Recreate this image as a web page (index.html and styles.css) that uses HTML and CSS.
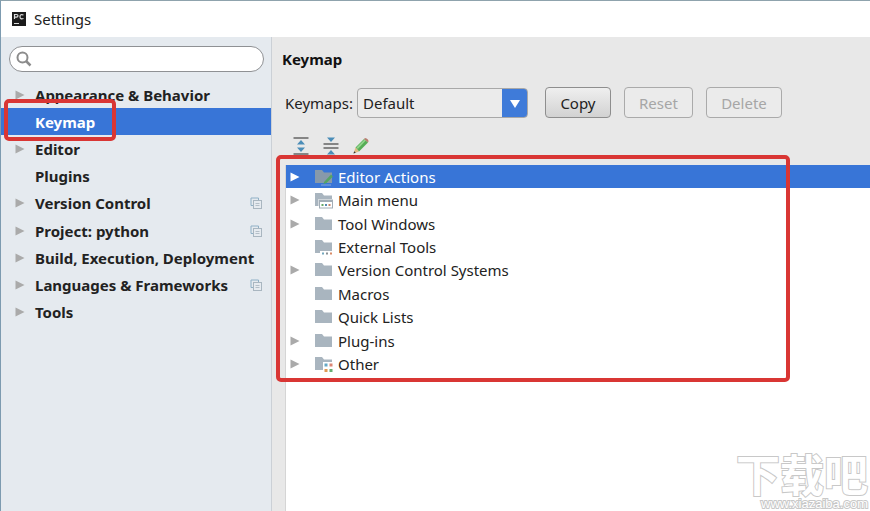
FILE: index.html
```
<!DOCTYPE html>
<html lang="en">
<head>
    <meta charset="UTF-8">
    <meta name="viewport" content="width=device-width, initial-scale=1.0">
    <title>Settings</title>
    <link rel="stylesheet" href="styles.css">
</head>
<body>
    <svg width="0" height="0" class="icon-defs" aria-hidden="true">
        <symbol id="arrow" viewBox="0 0 10 12">
            <path d="M0.5 1.5 L9.5 6 L0.5 10.5 Z" fill="currentColor"/>
        </symbol>
        <symbol id="copies" viewBox="0 0 12 12">
            <path d="M3 8.5 H1 V1 H8.500 V3" fill="none" stroke="#8fb0c6"/>
            <rect x="3.500" y="3.500" width="8" height="8" fill="#e6ebf0" stroke="#a9b6c0"/>
            <path d="M5.500 6.500 H9.500 M5.500 8.500 H9.500" stroke="#b4bfc8"/>
        </symbol>
        <symbol id="folder" viewBox="0 0 20 18">
            <path d="M1 2 H8 L10 4.500 H18 V15 H1 Z" fill="#a9b5bf"/>
        </symbol>
    </svg>

    <div class="window">
        <header class="titlebar">
            <svg class="app-icon" width="14" height="14" viewBox="0 0 14 14">
                <rect width="14" height="14" fill="#1c1c1c"/>
                <path d="M2.500 7 V2.500 H4.500 Q6 2.500 6 3.800 T4.500 5.200 H2.500 M11.500 3 Q8 1.700 8 4.700 T11.500 6.500" fill="none" stroke="#ddd" stroke-width="1.200"/>
                <path d="M2 11.500 H7" stroke="#ddd"/>
            </svg>
            <span>Settings</span>
        </header>

        <div class="content">
            <aside class="sidebar">
                <label class="search">
                    <svg width="16" height="16" viewBox="0 0 16 16" fill="none" stroke="#8c8c8c">
                        <circle cx="6.500" cy="6.500" r="5" stroke-width="2"/>
                        <path d="M10 10 L14.500 14.500" stroke-width="2.500"/>
                    </svg>
                    <input type="text" aria-label="Search settings">
                </label>
                <ul class="categories">
                    <li><svg class="arrow"><use href="#arrow"/></svg><span>Appearance &amp; Behavior</span></li>
                    <li class="selected"><span>Keymap</span><div class="mark mark-category"></div></li>
                    <li><svg class="arrow"><use href="#arrow"/></svg><span>Editor</span></li>
                    <li><span>Plugins</span></li>
                    <li><svg class="arrow"><use href="#arrow"/></svg><span>Version Control</span><svg class="copies"><use href="#copies"/></svg></li>
                    <li><svg class="arrow"><use href="#arrow"/></svg><span>Project: python</span><svg class="copies"><use href="#copies"/></svg></li>
                    <li><svg class="arrow"><use href="#arrow"/></svg><span>Build, Execution, Deployment</span></li>
                    <li><svg class="arrow"><use href="#arrow"/></svg><span>Languages &amp; Frameworks</span><svg class="copies"><use href="#copies"/></svg></li>
                    <li><svg class="arrow"><use href="#arrow"/></svg><span>Tools</span></li>
                </ul>
            </aside>

            <main class="panel">
                <h1>Keymap</h1>
                <div class="keymap-bar">
                    <label for="keymap">Keymaps:</label>
                    <div class="select">
                        <select id="keymap">
                            <option>Default</option>
                        </select>
                        <svg class="select-arrow" width="10" height="8" viewBox="0 0 10 8"><path d="M0 0 H10 L5 8 Z" fill="#fff"/></svg>
                    </div>
                    <div class="buttons">
                        <button type="button" class="copy">Copy</button>
                        <button type="button" class="reset" disabled>Reset</button>
                        <button type="button" class="delete" disabled>Delete</button>
                    </div>
                </div>

                <div class="toolbar">
                    <button type="button" aria-label="Expand all">
                        <svg width="16" height="18" viewBox="0 0 16 18">
                            <path d="M0.500 1 H15.500 M0.500 17 H15.500" stroke="#858585" stroke-width="2"/>
                            <path d="M8 3 L12 7.500 H4 Z M8 15 L12 10.500 H4 Z" fill="#4b8db8"/>
                        </svg>
                    </button>
                    <button type="button" aria-label="Collapse all">
                        <svg width="16" height="18" viewBox="0 0 16 18">
                            <path d="M0.500 7 H15.500 M0.500 11 H15.500" stroke="#858585" stroke-width="2"/>
                            <path d="M4 0.500 H12 L8 5 Z M4 17.500 H12 L8 13 Z" fill="#4b8db8"/>
                        </svg>
                    </button>
                    <button type="button" aria-label="Edit">
                        <svg width="16" height="18" viewBox="0 0 16 18">
                            <path d="M2.500 10.500 L11 2 L15 5.500 L6 14.500 Z" fill="#55ad55"/>
                            <path d="M3.500 10.500 L11.500 2.500 L12.800 3.500 L4.800 12 Z" fill="#93d58d"/>
                            <path d="M11 2 L12 1 Q15.500 1.500 15.500 4.500 L15 5.500 Z" fill="#b77d70"/>
                            <path d="M2.500 10.500 L6 14.500 L0.500 16.500 Z" fill="#dfbd83"/>
                            <path d="M1.200 14.300 L2.800 15.700 L0.500 16.500 Z" fill="#333"/>
                        </svg>
                    </button>
                </div>

                <div class="tree">
                    <ul class="actions">
                        <li class="selected">
                            <svg class="arrow"><use href="#arrow"/></svg>
                            <svg class="folder" viewBox="0 0 20 18"><path d="M1 2 H8 L10 4.500 H18 V15 H1 Z" fill="#8799aa"/><path d="M10 14 L17 6.500 L19 8.500 L12.500 15 L9.500 16 Z" fill="#55a464"/><path d="M7 17 H17" stroke="#87aadd"/></svg>
                            <span>Editor Actions</span>
                        </li>
                        <li>
                            <svg class="arrow"><use href="#arrow"/></svg>
                            <svg class="folder" viewBox="0 0 20 18"><use href="#folder"/><rect x="4.500" y="8" width="15" height="10" fill="#fff"/><rect x="5.500" y="9" width="13" height="8" fill="#fff" stroke="#a2adb6"/><path d="M5 10 H19" stroke="#a2adb6" stroke-width="2"/><path d="M7.500 14 H9.500" stroke="#65a765" stroke-width="2"/><path d="M11 14 H13" stroke="#5689b0" stroke-width="2"/><path d="M14.500 14 H16.500" stroke="#c48268" stroke-width="2"/></svg>
                            <span>Main menu</span>
                        </li>
                        <li>
                            <svg class="arrow"><use href="#arrow"/></svg>
                            <svg class="folder"><use href="#folder"/></svg>
                            <span>Tool Windows</span>
                        </li>
                        <li>
                            <svg class="folder" viewBox="0 0 20 18"><use href="#folder"/><rect x="6" y="13" width="14" height="5" fill="#fff"/><path d="M8 15.500 H10" stroke="#74a8bd" stroke-width="2"/><path d="M12 15.500 H14" stroke="#8a9093" stroke-width="2"/><path d="M16 15.500 H18" stroke="#d98b68" stroke-width="2"/></svg>
                            <span>External Tools</span>
                        </li>
                        <li>
                            <svg class="arrow"><use href="#arrow"/></svg>
                            <svg class="folder"><use href="#folder"/></svg>
                            <span>Version Control Systems</span>
                        </li>
                        <li>
                            <svg class="folder"><use href="#folder"/></svg>
                            <span>Macros</span>
                        </li>
                        <li>
                            <svg class="folder"><use href="#folder"/></svg>
                            <span>Quick Lists</span>
                        </li>
                        <li>
                            <svg class="arrow"><use href="#arrow"/></svg>
                            <svg class="folder"><use href="#folder"/></svg>
                            <span>Plug-ins</span>
                        </li>
                        <li>
                            <svg class="arrow"><use href="#arrow"/></svg>
                            <svg class="folder" viewBox="0 0 20 18"><use href="#folder"/><rect x="9" y="7" width="11" height="11" fill="#fff"/><rect x="10.500" y="8.500" width="3" height="3" fill="#64a8c5"/><rect x="15.500" y="8.500" width="3" height="3" fill="#dc8674"/><rect x="10.500" y="14" width="3" height="3" fill="#e09a55"/><rect x="15.500" y="14" width="3" height="3" fill="#65ad72"/></svg>
                            <span>Other</span>
                        </li>
                    </ul>
                    <div class="mark mark-actions"></div>
                </div>
            </main>
        </div>

        <div class="watermark" lang="zh-CN">
            <div class="watermark-name">下载吧</div>
            <div class="watermark-url">www.xiazaiba.com</div>
        </div>
    </div>
</body>
</html>
```
FILE: styles.css
```
* {
    box-sizing: border-box;
}
body {
    margin: 0;
    font-family: "Noto Sans", "Noto Sans CJK SC", sans-serif;
    font-size: 15px;
    line-height: 20px;
    color: #222;
}
ul {
    list-style: none;
    margin: 0;
    padding: 0;
}
svg {
    display: block;
    flex: none;
}
button, input, select {
    font: inherit;
    color: inherit;
}
.icon-defs {
    position: absolute;
}
.window {
    position: relative;
    display: flex;
    flex-direction: column;
    min-height: 100vh;
    border-top: 1px solid #8fa3ad;
    border-left: 1px solid #7d9bb0;
    overflow: hidden;
}
.titlebar {
    display: flex;
    align-items: center;
    gap: 8px;
    height: 36px;
    padding-left: 11px;
    background: #fff;
}
.content {
    flex: 1;
    display: flex;
}

/* left side */
.sidebar {
    width: 271px;
    flex: none;
    padding-top: 9px;
    background: #e5eaef;
    border-right: 1px solid #cbd0d6;
}
.search {
    display: flex;
    align-items: center;
    gap: 4px;
    height: 26px;
    margin: 0 7px 0 8px;
    padding: 0 12px 0 6px;
    background: #fff;
    border: 1px solid #8f9194;
    border-radius: 13px;
}
.search input {
    flex: 1;
    min-width: 0;
    padding: 0;
    border: 0;
    outline: 0;
    background: transparent;
}
.categories {
    display: grid;
    grid-template-columns: minmax(0, 1fr);
    grid-auto-rows: 1fr;
    height: 245px;
    margin-top: 9px;
    font-weight: bold;
}
.categories li {
    position: relative;
    display: grid;
    grid-template-columns: 20px minmax(0, 1fr) 12px;
    align-items: center;
    padding: 0 9px 0 14px;
    white-space: nowrap;
}
.categories span {
    grid-column: 2;
}
.arrow {
    width: 10px;
    height: 12px;
    color: #aaa;
}
.copies {
    width: 12px;
    height: 12px;
}
.selected,
.selected .arrow {
    color: #fff;
}
.selected {
    background: #3875d7;
}

/* right side */
.panel {
    flex: 1;
    min-width: 0;
    display: flex;
    flex-direction: column;
    padding-top: 12px;
    background: #e8e8e8;
}
h1 {
    margin: 0;
    padding-left: 10px;
    font-size: 15px;
    line-height: 20px;
    color: #111;
}
.keymap-bar {
    display: flex;
    align-items: center;
    margin-top: 18px;
    padding-left: 13px;
}
.select {
    position: relative;
    width: 171px;
    margin-left: 4px;
}
.select select {
    display: block;
    width: 100%;
    height: 30px;
    padding: 0 30px 0 5px;
    appearance: none;
    background: linear-gradient(#3f7bd9, #3f7bd9) right / 25px 100% no-repeat #ebebeb;
    border: 1px solid #a8a8a8;
    border-radius: 4px;
}
.select-arrow {
    position: absolute;
    right: 8px;
    top: 12px;
    pointer-events: none;
}
.buttons {
    display: flex;
    gap: 13px;
    margin-left: 17px;
}
.buttons button {
    height: 31px;
    padding: 0;
    background: linear-gradient(#efefef, #d2d2d2);
    border: 1px solid #8e8e8e;
    border-radius: 4px;
}
.buttons button:disabled {
    color: #a6a6a6;
    background: #ebebeb;
    border-color: #aaa;
}
.buttons .copy {
    width: 66px;
}
.buttons .reset {
    width: 69px;
}
.buttons .delete {
    width: 76px;
}
.toolbar {
    display: flex;
    gap: 14px;
    margin-top: 19px;
    padding-left: 21px;
}
.toolbar button {
    padding: 0;
    border: 0;
    background: none;
}
.tree {
    position: relative;
    flex: 1;
    margin: 10px 0 0 13px;
    background: #fff;
    border-left: 1px solid #d5d5d5;
}
.actions {
    display: grid;
    grid-auto-rows: 1fr;
    height: 211px;
}
.actions li {
    display: grid;
    grid-template-columns: 24px 20px 1fr;
    align-items: center;
    padding-left: 4px;
    white-space: nowrap;
}
.folder {
    grid-column: 2;
    width: 20px;
    height: 18px;
}
.actions span {
    grid-column: 3;
    padding-left: 4px;
}

/* red frames */
.mark {
    position: absolute;
    border: 4px solid #d93634;
    border-radius: 5px;
    pointer-events: none;
}
.mark-category {
    left: 3px;
    top: -9px;
    width: 112px;
    height: 42px;
}
.mark-actions {
    left: -10px;
    top: -10px;
    width: 514px;
    height: 227px;
}

.watermark {
    position: absolute;
    right: 2px;
    bottom: 0;
    color: #fff;
    text-align: right;
    paint-order: stroke fill;
    -webkit-text-stroke: 2px #c8c8c8;
}
.watermark-name {
    font-family: "Noto Sans CJK SC", sans-serif;
    font-size: 44px;
    font-weight: bold;
    line-height: 46px;
}
.watermark-url {
    font-family: "Liberation Sans", sans-serif;
    font-size: 13px;
    line-height: 15px;
}
```
